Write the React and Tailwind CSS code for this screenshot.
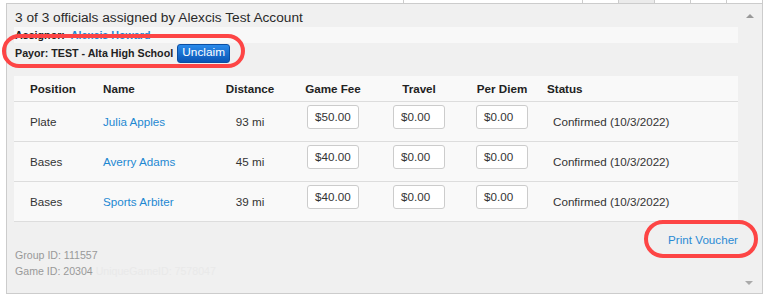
import React from "react";

const rows = [
  { pos: "Plate", name: "Julia Apples", dist: "93 mi", fee: "$50.00" },
  { pos: "Bases", name: "Averry Adams", dist: "45 mi", fee: "$40.00" },
  { pos: "Bases", name: "Sports Arbiter", dist: "39 mi", fee: "$40.00" },
];

function Money({ v }) {
  return (
    <div className="flex h-[24px] w-[52px] items-center rounded-[3px] border border-[#cccccc] bg-white pl-[7px] text-[11.65px] text-[#333]">
      {v}
    </div>
  );
}

export default function App() {
  return (
    <div className="relative h-[299px] w-[772px] overflow-hidden bg-white font-['Liberation_Sans',Arial,sans-serif]">
      {/* strip of the table above */}
      <div className="flex h-[3px] pl-[403px]">
        <div className="w-[179px] border-l border-[#cccccc]" />
        <div className="w-[36px] border-l border-[#cccccc]" />
        <div className="w-[36px] border-l border-[#cccccc] bg-[#ebebeb]" />
        <div className="w-[36px] border-l border-[#cccccc]" />
        <div className="w-[36px] border-l border-[#cccccc]" />
        <div className="w-[37px] border-x border-[#cccccc]" />
      </div>

      {/* panel */}
      <div className="relative ml-[6px] box-border h-[291px] w-[757px] border border-[#cccccc] bg-[#f0f0f0] pl-[7px] pr-[24px] pt-[6px]">
        <div className="pl-[1px] text-[13.7px] leading-[16px] text-[#2a2a2a]">
          3 of 3 officials assigned by Alexcis Test Account
        </div>
        <div className="mt-[1px] h-[16px] overflow-hidden bg-[#f8f8f8] pl-[1px] text-[10.7px] font-bold leading-[16px] text-[#222]">
          Assignor: <span className="ml-[3px] text-[#1e88d2]">Alexcis Howard</span>
        </div>
        <div className="flex h-[20px] items-center gap-[4px] pl-[1px]">
          <span className="text-[10.7px] font-bold text-[#222]">Payor: TEST - Alta High School</span>
          <button className="flex h-[19px] w-[53px] items-center justify-center rounded-[3px] border border-[#0b4ea2] bg-gradient-to-b from-[#2a8aea] to-[#0a55b5] text-[11.8px] leading-none text-white">
            Unclaim
          </button>
        </div>

        <div className="mt-[13px] bg-[#f9f9f9]">
          <div className="grid h-[26px] grid-cols-[73px_112px_70px_96px_76px_90px_1fr] items-center border-b border-[#dddddd] pl-[16px] text-[11.65px] font-bold text-[#222]">
            <div>Position</div>
            <div>Name</div>
            <div className="text-center">Distance</div>
            <div className="text-center">Game Fee</div>
            <div className="text-center">Travel</div>
            <div className="text-center">Per Diem</div>
            <div>Status</div>
          </div>
          {rows.map((r) => (
            <div
              key={r.name}
              className="grid h-[40px] grid-cols-[73px_112px_70px_96px_76px_90px_1fr] items-center border-b border-[#dddddd] pl-[16px] text-[11.65px] text-[#333]"
            >
              <div>{r.pos}</div>
              <div className="text-[#1e88d2]">{r.name}</div>
              <div className="text-center">{r.dist}</div>
              <div className="flex justify-center self-start pt-[3px]">
                <Money v={r.fee} />
              </div>
              <div className="flex justify-center self-start pt-[3px]">
                <Money v="$0.00" />
              </div>
              <div className="flex justify-center self-start pt-[3px]">
                <Money v="$0.00" />
              </div>
              <div className="pl-[6px]">Confirmed (10/3/2022)</div>
            </div>
          ))}
        </div>

        <div className="mt-[11px] h-[14px] text-right text-[11.65px] leading-[14px] text-[#2a8ad4]">
          Print Voucher
        </div>
        <div className="pl-[1px] text-[10.6px] leading-[16px] text-[#999]">
          <div>Group ID: 111557</div>
          <div>
            Game ID: 20304 <span className="text-[#e9e9e9]">UniqueGameID: 7578047</span>
          </div>
        </div>

        {/* scroll arrows */}
        <div className="absolute left-[739px] top-[10px] h-0 w-0 border-x-[4px] border-b-[4px] border-x-transparent border-b-[#999]" />
        <div className="absolute left-[738px] top-[277px] h-0 w-0 border-x-[4px] border-t-[4px] border-x-transparent border-t-[#aaa]" />
      </div>

      {/* annotations */}
      <div className="pointer-events-none absolute left-[2px] top-[34px] h-[34px] w-[243px] rounded-full border-[4px] border-[#fd4545]" />
      <div className="pointer-events-none absolute left-[644px] top-[220px] h-[38px] w-[114px] rounded-full border-[4px] border-[#fd4545]" />
    </div>
  );
}
